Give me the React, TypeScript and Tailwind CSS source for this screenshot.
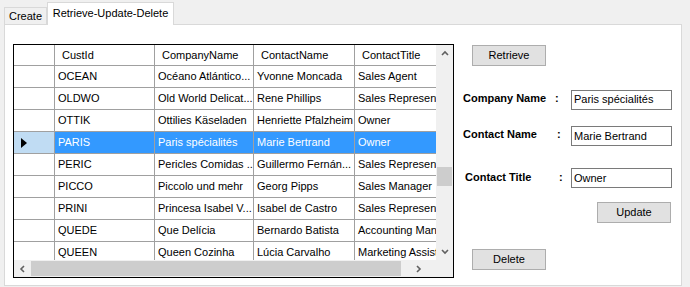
import React from 'react';

const rows = [
  ['OCEAN', 'Océano Atlántico...', 'Yvonne Moncada', 'Sales Agent'],
  ['OLDWO', 'Old World Delicat...', 'Rene Phillips', 'Sales Representative'],
  ['OTTIK', 'Ottilies Käseladen', 'Henriette Pfalzheim', 'Owner'],
  ['PARIS', 'Paris spécialités', 'Marie Bertrand', 'Owner'],
  ['PERIC', 'Pericles Comidas ...', 'Guillermo Fernán...', 'Sales Representative'],
  ['PICCO', 'Piccolo und mehr', 'Georg Pipps', 'Sales Manager'],
  ['PRINI', 'Princesa Isabel V...', 'Isabel de Castro', 'Sales Representative'],
  ['QUEDE', 'Que Delícia', 'Bernardo Batista', 'Accounting Manager'],
  ['QUEEN', 'Queen Cozinha', 'Lúcia Carvalho', 'Marketing Assistant'],
];

const widths = ['w-[100px]', 'w-[99px]', 'w-[101px]', 'w-[110px]'];
const headers = ['CustId', 'CompanyName', 'ContactName', 'ContactTitle'];

function Chevron({ dir }: { dir: 'up' | 'down' | 'left' | 'right' }) {
  const d = {
    up: 'M1 5 L4 2 L7 5',
    down: 'M1 2 L4 5 L7 2',
    left: 'M5 1 L2 4 L5 7',
    right: 'M2 1 L5 4 L2 7',
  }[dir];
  return (
    <svg width="8" height="8" viewBox="0 0 8 8">
      <path d={d} fill="none" stroke="#606060" strokeWidth="1.6" />
    </svg>
  );
}

function Button({ label, className }: { label: string; className: string }) {
  return (
    <div
      className={`w-[74px] h-[21px] bg-[#e1e1e1] border border-[#adadad] flex items-center justify-center ${className}`}
    >
      {label}
    </div>
  );
}

function TextBox({ value }: { value: string }) {
  return (
    <div className="w-[101px] h-[20px] bg-white border border-[#7a7a7a] flex items-center pl-[2px] whitespace-nowrap">
      {value}
    </div>
  );
}

export default function App() {
  return (
    <div
      className="w-[690px] h-[287px] bg-[#f0f0f0] pt-[2px] pl-[4px] text-[11px] text-black overflow-hidden"
      style={{ fontFamily: '"Liberation Sans", Arial, sans-serif' }}
    >
      {/* Tabs */}
      <div className="flex items-end h-[22px]">
        <div className="w-[43px] h-[17px] border border-b-0 border-[#d9d9d9] flex items-center justify-center pt-[1px]">
          Create
        </div>
        <div className="relative z-10 -mb-[1px] w-[127px] h-[23px] bg-white border border-b-0 border-[#d9d9d9] flex items-center justify-center pb-[2px]">
          Retrieve-Update-Delete
        </div>
      </div>

      {/* Tab page */}
      <div className="w-[678px] h-[262px] bg-white border border-[#d9d9d9] pl-[8px] pt-[19px] flex">
        {/* Grid */}
        <div className="w-[441px] h-[234px] border border-black flex flex-col">
          <div className="flex h-[215px]">
            <div className="w-[422px] overflow-hidden">
              <div className="flex h-[21px] border-b border-[#a0a0a0] w-[600px]">
                <div className="w-[41px] shrink-0 border-r border-[#a0a0a0]" />
                {headers.map((h, i) => (
                  <div
                    key={h}
                    className={`${widths[i]} shrink-0 border-r border-[#a0a0a0] pl-[7px] flex items-center whitespace-nowrap`}
                  >
                    {h}
                  </div>
                ))}
              </div>
              {rows.map((r, idx) => {
                const sel = r[0] === 'PARIS';
                return (
                  <div key={r[0]} className="flex h-[22px] border-b border-[#a0a0a0] w-[600px]">
                    <div
                      className={`w-[41px] shrink-0 border-r border-[#a0a0a0] flex items-center pl-[7px] ${
                        sel ? 'bg-[#c0dcf3]' : 'bg-white'
                      }`}
                    >
                      {sel && (
                        <svg width="6" height="10" viewBox="0 0 6 10">
                          <path d="M0 0 L6 5 L0 10 Z" fill="#000" />
                        </svg>
                      )}
                    </div>
                    {r.map((c, i) => (
                      <div
                        key={i}
                        className={`${widths[i]} shrink-0 border-r border-[#a0a0a0] pl-[3px] flex items-center whitespace-nowrap overflow-hidden ${
                          sel ? 'bg-[#3399ff] text-white' : ''
                        }`}
                      >
                        {c}
                      </div>
                    ))}
                  </div>
                );
              })}
            </div>
            {/* vertical scrollbar */}
            <div className="w-[17px] bg-[#f0f0f0] flex flex-col items-center">
              <div className="h-[17px] flex items-center justify-center">
                <Chevron dir="up" />
              </div>
              <div className="flex-1 w-full px-[1px] pt-[105px]">
                <div className="h-[19px] bg-[#cdcdcd]" />
              </div>
              <div className="h-[17px] flex items-center justify-center">
                <Chevron dir="down" />
              </div>
            </div>
          </div>
          {/* horizontal scrollbar */}
          <div className="flex h-[17px]">
            <div className="w-[422px] bg-[#f0f0f0] flex items-center">
              <div className="w-[17px] h-full flex items-center justify-center">
                <Chevron dir="left" />
              </div>
              <div className="w-[370px] h-[15px] bg-[#cdcdcd]" />
              <div className="flex-1 h-full flex items-center justify-center">
                <Chevron dir="right" />
              </div>
            </div>
            <div className="w-[17px] bg-[#f0f0f0]" />
          </div>
        </div>

        {/* Right panel */}
        <div className="ml-[9px] flex flex-col">
          <Button label="Retrieve" className="ml-[9px] mt-[1px]" />

          <div className="flex items-center mt-[23px] h-[21px]">
            <span className="w-[92px] font-bold whitespace-nowrap -mt-[3px]">Company Name</span>
            <span className="w-[16px] font-bold -mt-[3px]">:</span>
            <TextBox value="Paris spécialités" />
          </div>

          <div className="flex items-center mt-[16px] h-[20px]">
            <span className="w-[94px] font-bold whitespace-nowrap -mt-[4px]">Contact Name</span>
            <span className="w-[14px] font-bold -mt-[4px]">:</span>
            <TextBox value="Marie Bertrand" />
          </div>

          <div className="flex items-center mt-[22px] h-[20px]">
            <span className="w-[94px] ml-[2px] font-bold whitespace-nowrap -mt-[2px]">Contact Title</span>
            <span className="w-[12px] font-bold -mt-[2px]">:</span>
            <TextBox value="Owner" />
          </div>

          <Button label="Update" className="ml-[134px] mt-[14px]" />
          <Button label="Delete" className="ml-[9px] mt-[26px]" />
        </div>
      </div>
    </div>
  );
}
